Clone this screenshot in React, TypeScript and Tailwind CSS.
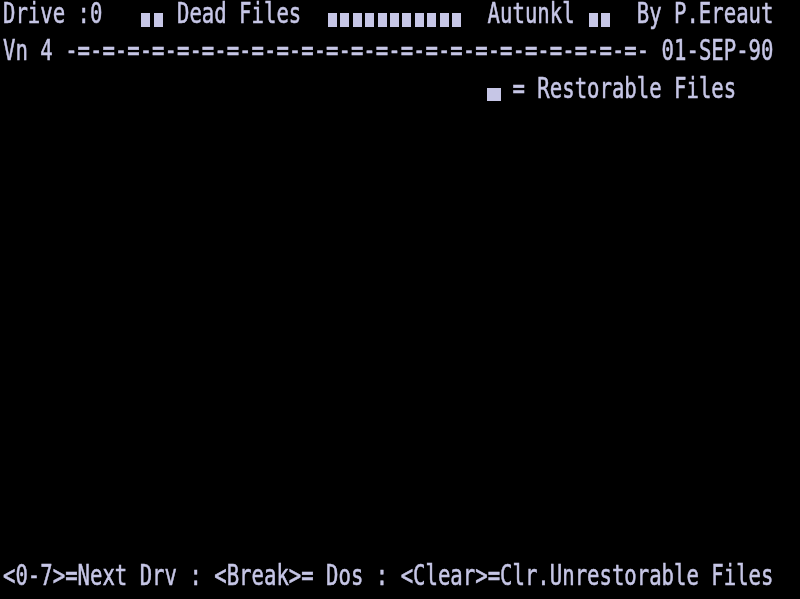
import React from "react";

// 64 x 16 character screen. "#" = small graphic block, "%" = wide graphic block
const ROWS: string[] = [
  "Drive :0   ## Dead Files  ###########  Autunkl ##  By P.Ereaut",
  "Vn 4 " + "-=".repeat(23) + "- 01-SEP-90",
  " ".repeat(39) + "% = Restorable Files",
  "",
  "",
  "",
  "",
  "",
  "",
  "",
  "",
  "",
  "",
  "",
  "",
  "<0-7>=Next Drv : <Break>= Dos : <Clear>=Clr.Unrestorable Files",
];

const Block: React.FC<{ wide?: boolean }> = ({ wide }) => (
  <div className="w-[12.43px] h-full flex justify-center shrink-0">
    {wide ? (
      <div className="mt-[13px] w-[14px] h-[13px] shrink-0 bg-[#c6c6e6]" />
    ) : (
      <div className="mt-[13px] w-[9px] h-[14px] bg-[#c6c6e6]" />
    )}
  </div>
);

const ScreenRow: React.FC<{ text: string }> = ({ text }) => {
  const runs = text.match(/([#%]+|[^#%]+)/g) || [];
  return (
    <div className="flex h-full pl-[3px]">
      {runs.map((run, i) =>
        run[0] === "#" || run[0] === "%" ? (
          run.split("").map((ch, j) => <Block key={i + "-" + j} wide={ch === "%"} />)
        ) : (
          <span
            key={i}
            className="inline-block shrink-0 origin-top scale-y-[1.37] leading-none whitespace-pre [-webkit-text-stroke:0.4px_#c6c6e6]"
          >
            {run}
          </span>
        )
      )}
    </div>
  );
};

export default function App() {
  return (
    <div className="w-full h-screen bg-black overflow-hidden">
      <div className="grid grid-rows-16 h-full text-[20.65px] text-[#c6c6e6] font-['DejaVu_Sans_Mono',monospace] blur-[0.4px]">
        {ROWS.map((row, i) => (
          <ScreenRow key={i} text={row} />
        ))}
      </div>
    </div>
  );
}
